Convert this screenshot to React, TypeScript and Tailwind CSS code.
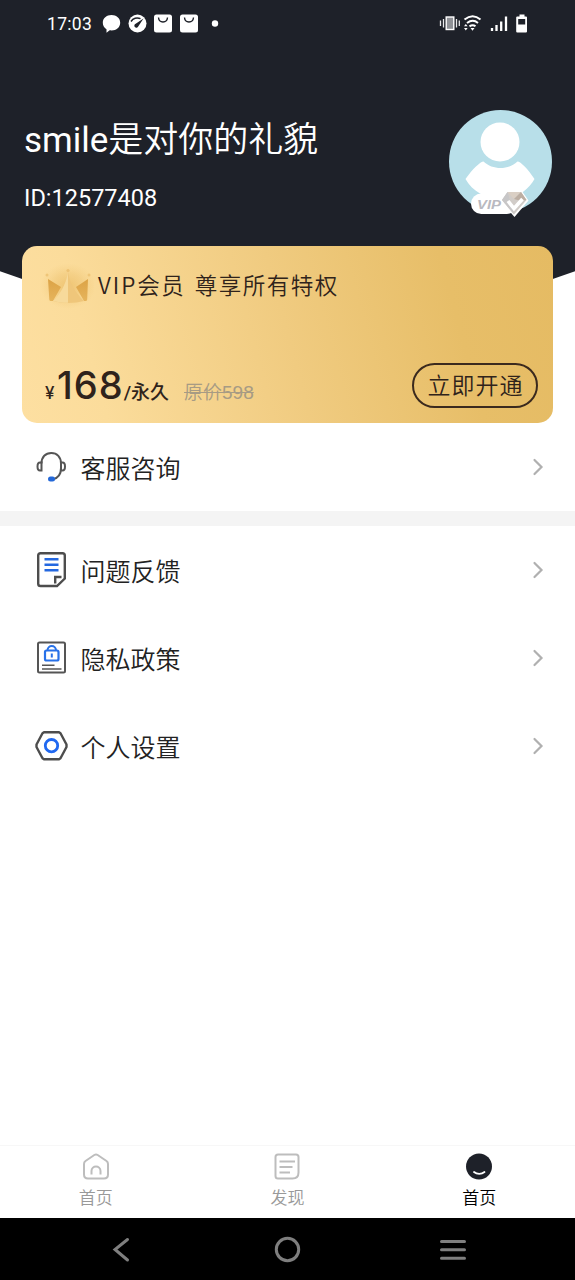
import type { ReactNode } from "react"

const StatusBar = () => (
  <div className="flex h-12 items-center pl-[47px] pr-[46px] text-white">
    <span className="w-[46px] pt-[2px] text-[17.500px] font-[450] leading-none tracking-[0.300px]">17:03</span>
    <svg className="ml-[9px]" width="120" height="22" viewBox="0 0 120 22" fill="none">
      <path d="M9.500 2c5 0 8.700 3.200 8.700 7.700s-3.700 7.700-8.700 7.700c-.7 0-1.200 0-1.800-.1L4.500 19.800v-3.600C2.200 14.700.8 12.400.8 9.700.8 5.200 4.500 2 9.500 2Z" fill="#fff" />
      <circle cx="35.500" cy="10.500" r="9" fill="#fff" />
      <path d="M29 8.500c2-3.400 6-4.500 9.500-2.800" stroke="#1e2129" strokeWidth="1.500" />
      <path d="m41.500 5.500-7.800 5.300a2 2 0 1 0 2.500 2.600l5.300-7.900Z" fill="#1e2129" />
      <rect x="52" y="1.500" width="18" height="18" rx="2.500" fill="#fff" />
      <path d="M56.500 4.500c.5 6 8.500 6 9 0" stroke="#1e2129" strokeWidth="1.400" />
      <rect x="78" y="1.500" width="18" height="18" rx="2.500" fill="#fff" />
      <path d="M82.500 4.500c.5 6 8.500 6 9 0" stroke="#1e2129" strokeWidth="1.400" />
      <circle cx="113" cy="10.500" r="3.200" fill="#fff" />
    </svg>
    <svg className="ml-auto" width="90" height="22" viewBox="0 0 90 22" fill="none">
      <rect x="7.200" y="4" width="7.600" height="12.500" fill="#8f9196" stroke="#fff" strokeWidth="1.400" />
      <path d="M4.500 6v8.500M1.500 7.500V13M17.500 6v8.500M20.300 7.500V13" stroke="#e8e8ea" strokeWidth="1.300" />
      <path d="M25.500 6.500c5.300-4.300 11-4.300 16 0M28 10c4-3 7.500-3 11 0M30.500 13.300c2.200-1.500 4.200-1.500 6 0" stroke="#fff" strokeWidth="2" />
      <path d="m33.500 17.800-2-2.800h4l-2 2.800ZM25 13.300l1.800-2.300 1.800 2.300H25ZM25 15h3.600l-1.800 2.500L25 15Z" fill="#fff" />
      <path d="M53 15v3M57.500 12v6M62.200 8.500V18M67 3.500V18" stroke="#fff" strokeWidth="2.300" />
      <path d="M80.500 1.500h5v2H87q1 0 1 1v14q0 1-1 1h-8.800q-1 0-1-1v-14q0-1 1-1h2.300v-2Z" fill="#fff" />
      <path d="M79.200 6h7v5.500h-7z" fill="#1e2129" />
    </svg>
  </div>
)

const Avatar = () => (
  <svg width="103" height="110" viewBox="0 0 103 110" fill="none">
    <circle cx="51.500" cy="51.500" r="51.500" fill="#b8dfe9" />
    <circle cx="51" cy="32" r="19.500" fill="#fff" />
    <path d="M34.500 51.500c9 8.700 25 8.700 34 0 3 0 10.500 7.500 17 17.500C79 81 66 89 51.500 89S23 81 16.500 69c7-10 15-17.500 18-17.500Z" fill="#fff" />
    <rect x="22" y="83.500" width="46" height="20.500" rx="10.200" fill="#fff" />
    <path d="M58 80.500h14.500L79.500 90.500 65.500 107 51 90.500Z" fill="#fff" />
    <path d="M58.500 82H72l5.500 8L65 104.500 53 90l5.500-8Z" fill="#d1ccc8" />
    <path d="m58.500 82 6.500 7 7-7H58.500Z" fill="#dacfc4" />
    <path d="m72 82 5.500 8-5.500 1-7-2 7-7Z" fill="#bcaea2" />
    <path d="m53 90 5.500-8 2.500 8.500 4 14L53 90Z" fill="#c7c6c7" />
    <path d="m59 91 6 7.500 8.500-9.500" stroke="#fff" strokeWidth="3.600" />
    <text x="28" y="98.500" fontFamily="Liberation Sans, sans-serif" fontSize="13" fontWeight="700" fontStyle="italic" fill="#b9b9c0" textLength="24" lengthAdjust="spacingAndGlyphs">VIP</text>
  </svg>
)

const Crown = () => (
  <svg width="54" height="48" viewBox="0 0 54 48" fill="none">
    <defs>
      <radialGradient id="glow">
        <stop offset="0" stopColor="#e8b75b" stopOpacity=".65" />
        <stop offset=".55" stopColor="#eabc65" stopOpacity=".35" />
        <stop offset="1" stopColor="#f0c877" stopOpacity="0" />
      </radialGradient>
      <linearGradient id="crownSide" x1="0" y1="0" x2="0" y2="1">
        <stop stopColor="#dca346" />
        <stop offset="1" stopColor="#e6b45c" />
      </linearGradient>
    </defs>
    <ellipse cx="28" cy="25" rx="28" ry="23" fill="url(#glow)" />
    <path d="m8 18 13 8-8 14h-2.200q-1.300 0-1.500-1.500L8 18ZM48 18l-12 8 8 14h1.500q1.500 0 1.700-1.500L48 18Z" fill="url(#crownSide)" />
    <path d="M28 11c2 12 7 20 16 29-10 2.500-21 2.500-31 0 8-8 13-17 15-29Z" fill="#efc67a" />
    <path d="M28 11c-2 12-7 21-15 29 5.500 1.300 10 1.800 15 1.800V11Z" fill="#f7da9b" />
    <circle cx="28" cy="9.500" r="1.600" fill="#edc274" />
    <circle cx="7" cy="14" r="1.500" fill="#efc679" />
    <circle cx="49" cy="14" r="1.500" fill="#efc679" />
  </svg>
)

const VipCard = () => (
  <section className="relative mx-[22px] -mt-[76px] h-[177px] rounded-[15px] bg-[linear-gradient(75deg,#fddfa1_0%,#fbdc9b_15%,#f0cb80_50%,#e7be68_80%,#e5bb63_100%)] text-[#2f231b]">
    <div className="flex h-[78px] items-center pl-[18px]">
      <Crown />
      <h2 className="ml-[4px] mt-[-2px] font-['Noto_Sans_CJK_SC',sans-serif] text-[22.500px] font-[350] leading-8 tracking-[1.500px] [word-spacing:3px]">
        <span className="tracking-[2px]">VIP</span>会员 尊享所有特权
      </h2>
    </div>
    <div className="mt-[38px] flex h-[46px] items-center justify-between pl-[23px] pr-[15px]">
      <div className="flex items-baseline font-medium leading-none">
        <span className="w-[12px] font-[Inter,sans-serif] text-[17px]">¥</span>
        <span className="font-[Inter,sans-serif] text-[38px] font-[450] tracking-[1px]">168</span>
        <span className="text-[19px]">/永久</span>
        <span className="ml-[15px] font-['Liberation_Sans','Noto_Sans_CJK_SC',sans-serif] text-[19px] font-[350] text-[#a79b84] line-through">原价598</span>
      </div>
      <button className="h-[45px] w-[126px] rounded-full border-2 border-[#3b2a1e] pl-px pt-[3px] text-[23px] font-[350] leading-none tracking-[1px]">
        立即开通
      </button>
    </div>
  </section>
)

const HeadsetIcon = () => (
  <svg width="34" height="38" viewBox="0 0 34 38" fill="none" stroke="#555" strokeWidth="2">
    <path d="M7.500 15.500C7.500 9 11.500 5 17.300 5S27 9 27 15.500V20c0 6-3 10-8 11.300" />
    <path d="M7.500 14.500H6c-2 0-2.500 1.500-2.500 4s.5 4 2.500 4h1.500v-8ZM27 14.500h1.500c2 0 2.500 1.500 2.500 4s-.5 4-2.500 4H27v-8Z" />
    <rect x="14" y="28.500" width="7" height="5" rx="2.500" fill="#2468d8" stroke="none" />
  </svg>
)

const FeedbackIcon = () => (
  <svg width="34" height="38" viewBox="0 0 34 38" fill="none" stroke="#4d4d4d" strokeWidth="2.400">
    <path d="M6.500 2.200h22c1.500 0 2.300.8 2.300 2.300v23L23 35H6.500c-1.500 0-2.300-.8-2.300-2.300V4.500c0-1.500.8-2.300 2.300-2.300Z" />
    <path d="M27.500 26h-6.300v6.500" />
    <path d="M10.500 8.200h14M10.500 13.700h14M10.500 19.200h14" stroke="#2468e0" />
  </svg>
)

const PrivacyIcon = () => (
  <svg width="34" height="38" viewBox="0 0 34 38" fill="none" stroke="#555" strokeWidth="2">
    <rect x="4" y="3.500" width="27" height="30" rx="1.500" />
    <path d="M8 26.300h12.500M8 30h19.500" strokeWidth="1.600" />
    <rect x="11" y="11.500" width="13.500" height="10" rx="1.500" stroke="#2871e8" strokeWidth="2.200" />
    <path d="M13.500 11.500c0-6 8.500-6 8.500 0M17.800 14.500v4" stroke="#2871e8" strokeWidth="2" />
  </svg>
)

const SettingsIcon = () => (
  <svg width="34" height="38" viewBox="0 0 34 38" fill="none">
    <path d="M10 5.200h15l1.500 1 6 11.300v2.500l-6 11.300-1.500 1H10l-1.500-1-6-11.300v-2.500l6-11.300 1.500-1Z" stroke="#4d4d4d" strokeWidth="2.400" strokeLinejoin="round" />
    <circle cx="17.500" cy="18.700" r="6.200" stroke="#2068f0" strokeWidth="2.800" />
  </svg>
)

const MenuRow = ({ icon, label }: { icon: ReactNode; label: string }) => (
  <div className="flex h-[88px] items-center pl-[34px] pr-[31px]">
    {icon}
    <span className="ml-[12.500px] pt-[5px] text-[25px] font-[350] leading-none text-[#222]">{label}</span>
    <svg className="ml-auto" width="12" height="18" viewBox="0 0 12 18" fill="none">
      <path d="m2.500 2 7 7-7 7" stroke="#b0b0b0" strokeWidth="2.200" strokeLinecap="round" />
    </svg>
  </div>
)

const tabs = [
  {
    label: "首页",
    color: "text-[#999]",
    icon: (
      <g stroke="#bdbdbd" strokeWidth="2">
        <path d="M3.500 9 12.300 3Q14 2 15.700 3l8.800 6q1.500 1 1.500 3v10.500q0 4-4 4H6q-4 0-4-4V12q0-2 1.500-3Z" />
        <path d="M9.500 22.500V19c0-6 9-6 9 0v3.500" />
      </g>
    ),
  },
  {
    label: "发现",
    color: "text-[#999]",
    icon: (
      <g stroke="#bdbdbd" strokeWidth="2">
        <path d="M5 2.500h18q2.500 0 2.500 2.500v15.500q0 6-6 6H5Q2.500 26.500 2.500 24V5Q2.500 2.500 5 2.500Z" />
        <path d="M6.500 9.500h15.500M6.500 15h13M6.500 20.500h10.500" />
      </g>
    ),
  },
  {
    label: "首页",
    color: "text-black",
    icon: (
      <g>
        <circle cx="14" cy="14.500" r="13" fill="#1e2129" />
        <path d="M9 20c3 2.500 7.500 2.500 10.500 0" stroke="#fff" strokeWidth="1.800" strokeLinecap="round" />
      </g>
    ),
  },
]

export default function App() {
  return (
    <div className="flex h-[1280px] w-[575px] flex-col overflow-hidden bg-white font-[Roboto,'Noto_Sans_CJK_SC',sans-serif]">
      <header className="h-[322px] shrink-0 bg-[#1e2129] text-white [clip-path:ellipse(840px_840px_at_50%_-518px)]">
        <StatusBar />
        <div className="flex justify-between pl-6 pr-[23px] pt-[62px]">
          <div>
            <h1 className="mt-[13px] text-[35px] font-[350] leading-[36px]">
              <span className="font-normal">smile</span>是对你的礼貌
            </h1>
            <p className="mt-[25px] text-[23.500px] leading-7">ID:12577408</p>
          </div>
          <Avatar />
        </div>
      </header>

      <VipCard />

      <main className="flex-1">
        <MenuRow icon={<HeadsetIcon />} label="客服咨询" />
        <div className="h-[15px] bg-[#f4f4f4]" />
        <MenuRow icon={<FeedbackIcon />} label="问题反馈" />
        <MenuRow icon={<PrivacyIcon />} label="隐私政策" />
        <MenuRow icon={<SettingsIcon />} label="个人设置" />
      </main>

      <nav className="grid h-[73px] shrink-0 grid-cols-3 border-t border-[#f7f7f7]">
        {tabs.map((tab, i) => (
          <div key={i} className="flex flex-col items-center pt-[6px]">
            <svg width="28" height="29" viewBox="0 0 28 29" fill="none">{tab.icon}</svg>
            <span className={`mt-[9px] text-[17px] font-[350] leading-none ${tab.color}`}>{tab.label}</span>
          </div>
        ))}
      </nav>

      {/* Android system navigation */}
      <div className="h-[62px] shrink-0 bg-black">
        <svg width="575" height="62" viewBox="0 0 575 62" fill="none" stroke="#7f7f7f" strokeWidth="3" strokeLinecap="round">
          <path d="m127.500 21.500-12.500 10 12.500 10.500" />
          <circle cx="287.500" cy="31.500" r="11.200" />
          <path d="M441.500 23.500h23M441.500 31.700h23M441.500 40.200h23" />
        </svg>
      </div>
    </div>
  )
}
